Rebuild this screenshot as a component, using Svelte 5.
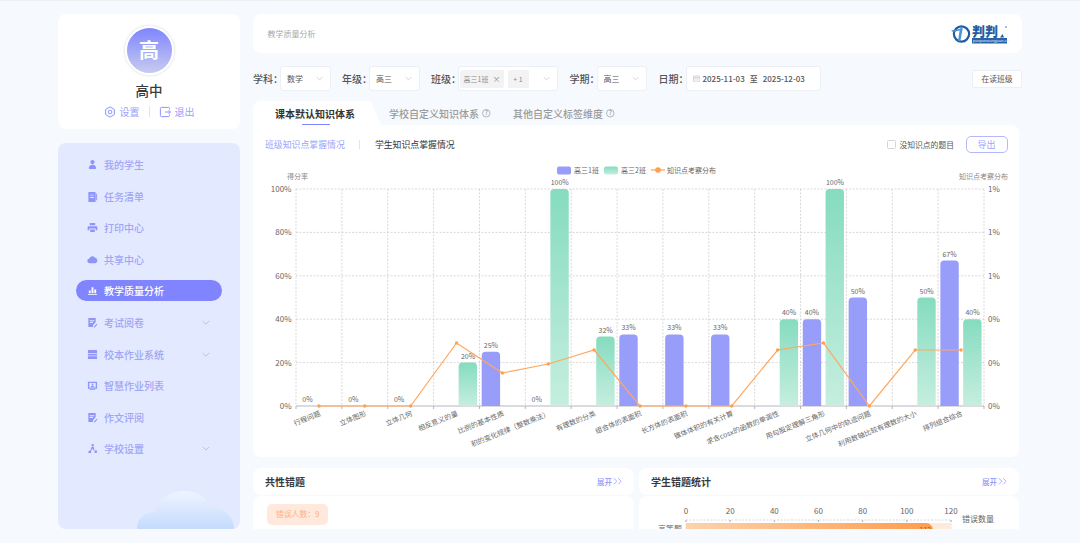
<script lang="ts">
	const navItems = [
		{ label: '我的学生', d: 'M6 1a2.3 2.3 0 1 1 0 4.6A2.3 2.3 0 0 1 6 1zM2 10c0-2.4 1.6-3.8 4-3.8s4 1.4 4 3.8c0 .6-.4 1-1 1H3c-.6 0-1-.4-1-1z' },
		{ label: '任务清单', d: 'M1.5 1h7a1 1 0 0 1 1 1v9a1 1 0 0 1-1 1h-7zM3.5 4v1h4V4zM3.5 6.5v1h4v-1zM10 3h1v7h-1z' },
		{ label: '打印中心', d: 'M3 1h6v2.5H3zM1.5 4.5h9a.8.8 0 0 1 .8.8V9H9.5V7.2h-7V9H.7V5.3a.8.8 0 0 1 .8-.8zM3.5 8.2h5V11h-5z' },
		{ label: '共享中心', d: 'M3 10a2.5 2.5 0 0 1-.4-5A3.5 3.5 0 0 1 9 4.2 3 3 0 0 1 9.2 10z' },
		{ label: '教学质量分析', d: 'M1 10h10v1H1zM2 6h2v3H2zM5 2.5h2V9H5zM8 5h2v4H8z', active: true },
		{ label: '考试阅卷', d: 'M1.5 1h8v4.5l-3 3.5V11h-5zM3 3.5v1h5v-1zM3 5.5v1h3.5v-1zM7.5 10.5l3-3.2.9.9-3 3.2H7.5z', more: true },
		{ label: '校本作业系统', d: 'M2 1h8a1 1 0 0 1 1 1v2.5H1V2a1 1 0 0 1 1-1zM1 5.5h10V7H1zM1 8h10v2a1 1 0 0 1-1 1H2a1 1 0 0 1-1-1z', more: true },
		{ label: '智慧作业列表', d: 'M1 2h10v7.5H1zM2.5 3.2v5h7v-5zM3 10h6v1H3zM6 3.8a1 1 0 1 1 0 2 1 1 0 0 1 0-2zM4 7.6c0-1 1-1.4 2-1.4s2 .4 2 1.4z' },
		{ label: '作文评阅', d: 'M1.5 1h8v4.5l-3 3.5V11h-5zM3 3.5v1h5v-1zM3 5.5v1h3.5v-1zM7.5 10.5l3-3.2.9.9-3 3.2H7.5z' },
		{ label: '学校设置', d: 'M6.2 1a1.3 1.3 0 1 1 0 2.6 1.3 1.3 0 0 1 0-2.6zM5 4.2h2.4L8 8H6.8L6 6 4.5 8.5V11h-3V9.2L4 7.5zM9.5 8a1.5 1.5 0 1 1 0 3 1.5 1.5 0 0 1 0-3z', more: true }
	];

	// chart coordinates are page pixels, the svg viewBox starts at the panel origin
	const left = 296;
	const right = 984;
	const top = 189;
	const base = 406;
	const step = (right - left) / 15;
	const plotH = base - top;

	const points = [
		{ name: '行程问题', blue: 0, line: 406 },
		{ name: '立体图形', blue: 0, line: 406 },
		{ name: '立体几何', blue: 0, line: 406 },
		{ name: '相反意义的量', green: 20, line: 343 },
		{ name: '比例的基本性质', blue: 25, line: 373 },
		{ name: '积的变化规律（整数乘法）', blue: 0, green: 100, line: 364 },
		{ name: '有理数的分类', green: 32, line: 350 },
		{ name: '组合体的表面积', blue: 33, line: 406 },
		{ name: '长方体的表面积', blue: 33, line: 406 },
		{ name: '锥体体积的有关计算', blue: 33, line: 406 },
		{ name: '求含cosx的函数的单调性', green: 40, line: 350 },
		{ name: '用勾股定理解三角形', blue: 40, green: 100, line: 343 },
		{ name: '立体几何中的轨迹问题', blue: 50, line: 406 },
		{ name: '利用数轴比较有理数的大小', green: 50, line: 350 },
		{ name: '排列组合综合', blue: 67, green: 40, line: 350 }
	];

	const yTicks = [
		{ left: '100%', right: '1%' },
		{ left: '80%', right: '1%' },
		{ left: '60%', right: '1%' },
		{ left: '40%', right: '0%' },
		{ left: '20%', right: '0%' },
		{ left: '0%', right: '0%' }
	];

	const cx = (i: number) => left + step * (i + 0.5);
	const barW = 18.4;

	function barPath(x: number, pct: number) {
		const h = (pct / 100) * plotH;
		const y = base - h;
		const r = Math.min(4, h);
		return `M${x} ${base}V${y + r}Q${x} ${y} ${x + r} ${y}H${x + barW - r}Q${x + barW} ${y} ${x + barW} ${y + r}V${base}Z`;
	}

	const linePath = points.map((p, i) => `${cx(i)},${p.line}`).join(' ');
	const errorTicks = [0, 20, 40, 60, 80, 100, 120];
	const errorX = (v: number) => 686 + (v / 120) * 265;
</script>

{#snippet chevron()}
	<svg class="chevron" viewBox="0 0 10 6"><path d="M1 1l4 4 4-4" /></svg>
{/snippet}

{#snippet help()}
	<svg class="help" viewBox="0 0 10 10">
		<circle cx="5" cy="5" r="4.4" />
		<text x="5" y="7.6" text-anchor="middle">?</text>
	</svg>
{/snippet}

{#snippet expand()}
	<span class="expand">
		展开
		<svg viewBox="0 0 10 8"><path d="M1 .8L4 4 1 7.2M5.5 .8L8.5 4 5.5 7.2" /></svg>
	</span>
{/snippet}

<div class="page">
	<aside class="side">
		<section class="profile">
			<div class="avatar">高</div>
			<div class="school">高中</div>
			<div class="links">
				<span class="link">
					<svg viewBox="0 0 12 12"><path d="M6 .9l4.4 2.5v5.2L6 11.1 1.6 8.6V3.4z" /><circle cx="6" cy="6" r="1.8" /></svg>
					设置
				</span>
				<i class="sep"></i>
				<span class="link">
					<svg viewBox="0 0 12 12"><path d="M10.5 3.5V2.4a1 1 0 0 0-1-1H2.4a1 1 0 0 0-1 1v7.2a1 1 0 0 0 1 1h7.1a1 1 0 0 0 1-1V8.5M6 6h5.4M9.6 4.2L11.4 6 9.6 7.8" /></svg>
					退出
				</span>
			</div>
		</section>

		<nav class="nav">
			{#each navItems as item}
				<div class="nav-item" class:active={item.active}>
					<svg class="nav-icon" viewBox="0 0 12 12"><path fill-rule="evenodd" d={item.d} /></svg>
					<span>{item.label}</span>
					{#if item.more}{@render chevron()}{/if}
				</div>
			{/each}
			<svg class="cloud" viewBox="0 0 97 38">
				<defs>
					<linearGradient id="cloudFill" x1="0" y1="0" x2="0" y2="1">
						<stop offset="0" stop-color="#eef4ff" />
						<stop offset="1" stop-color="#c4dbfd" />
					</linearGradient>
				</defs>
				<path fill="url(#cloudFill)" d="M0 38C0 27 8 21 18 21c1-11 14-21 29-21 14 0 24 7 27 17 13-1 23 8 23 21z" />
			</svg>
		</nav>
	</aside>

	<main class="main">
		<header class="top">
			<span class="crumb">教学质量分析</span>
			<svg class="logo" viewBox="0 0 58 22">
				<circle cx="10.5" cy="11" r="7.6" fill="none" stroke="#1f5da3" stroke-width="2.2" />
				<path d="M0 7.5l8.5-1.5 3.5-2.5-2.6 14.5H7l1.6-10.5-6.6 1.5z" fill="#4d93cf" />
				<text x="21" y="13.2" class="logo-name">判判</text>
				<rect x="21" y="15" width="35" height="5.5" fill="#2a62a8" />
				<text x="22" y="19.3" class="logo-sub">panpanwangjuan.cn</text>
				<path d="M49 14.5l2.5-3.5 1.5 3.5z" fill="#1f5da3" />
				<circle cx="55" cy="4" r="1.1" fill="#8fb1d6" />
			</svg>
		</header>

		<div class="filters">
			<label class="field">
				<span>学科：</span>
				<div class="select w50">数学{@render chevron()}</div>
			</label>
			<label class="field">
				<span>年级：</span>
				<div class="select w50">高三{@render chevron()}</div>
			</label>
			<label class="field">
				<span>班级：</span>
				<div class="select w100">
					<em class="chip">高三1班<b>×</b></em>
					<em class="chip plus">+ 1</em>
					{@render chevron()}
				</div>
			</label>
			<label class="field">
				<span>学期：</span>
				<div class="select w50">高三{@render chevron()}</div>
			</label>
			<label class="field">
				<span>日期：</span>
				<div class="select date">
					<svg viewBox="0 0 8 8"><rect x=".5" y="1" width="7" height="6.5" rx=".8" /><path d="M.5 3h7" /></svg>
					<strong>2025-11-03</strong><strong class="to">至</strong><strong>2025-12-03</strong>
				</div>
			</label>
			<button class="reading">在读班级</button>
		</div>

		<div class="tabs">
			<div class="tab current">课本默认知识体系</div>
			<div class="tab">学校自定义知识体系{@render help()}</div>
			<div class="tab">其他自定义标签维度{@render help()}</div>
		</div>

		<section class="panel">
			<div class="tools">
				<span class="sub on">班级知识点掌握情况</span>
				<i class="sep"></i>
				<span class="sub">学生知识点掌握情况</span>
				<span class="check"><i></i>没知识点的题目</span>
				<button class="export">导出</button>
			</div>

			<svg class="chart" viewBox="253 160 766 297">
				<defs>
					<linearGradient id="greenBar" x1="0" y1="0" x2="0" y2="1">
						<stop offset="0" stop-color="#85dcbf" />
						<stop offset="1" stop-color="#c6eedf" />
					</linearGradient>
				</defs>

				<!-- legend -->
				<rect x="557" y="166.5" width="14" height="8" rx="2" fill="#989dfa" />
				<text class="t7" x="574" y="173">高三1班</text>
				<rect x="604" y="166.5" width="14" height="8" rx="2" fill="url(#greenBar)" />
				<text class="t7" x="621" y="173">高三2班</text>
				<path d="M651 170h14" stroke="#ffa04d" stroke-width="1.2" />
				<circle cx="658" cy="170" r="2.8" fill="#ffa04d" />
				<text class="t7" x="667" y="173">知识点考察分布</text>

				<text class="t7 dim" x="287" y="179">得分率</text>
				<text class="t7 dim" x="1008" y="179" text-anchor="end">知识点考察分布</text>

				<!-- grid -->
				{#each yTicks as tick, i}
					{@const y = top + (plotH / 5) * i}
					{#if i < 5}<line class="grid" x1={left} x2={right} y1={y} y2={y} />{/if}
					<text class="axis" x="291.5" y={y + 3} text-anchor="end">{tick.left}</text>
					<text class="axis" x="988" y={y + 3}>{tick.right}</text>
				{/each}
				{#each Array(16) as _, i}
					<line class="grid" x1={left + step * i} x2={left + step * i} y1={top} y2={base} />
					<line class="base" x1={left + step * i} x2={left + step * i} y1={base} y2={base + 3} />
				{/each}
				<line class="base" x1={left} x2={right} y1={base} y2={base} />

				<!-- bars -->
				{#each points as p, i}
					{#if p.blue !== undefined}
						{#if p.blue > 0}<path d={barPath(cx(i) - 20.7, p.blue)} fill="#989dfa" />{/if}
						<text class="t7" x={cx(i) - 11.5} y={base - (p.blue / 100) * plotH - 4} text-anchor="middle">{p.blue}%</text>
					{/if}
					{#if p.green !== undefined}
						<path d={barPath(cx(i) + 2.1, p.green)} fill="url(#greenBar)" />
						<text class="t7" x={cx(i) + 11.5} y={base - (p.green / 100) * plotH - 4} text-anchor="middle">{p.green}%</text>
					{/if}
				{/each}

				<polyline points={linePath} fill="none" stroke="#ffa75f" stroke-width="1.2" />
				{#each points as p, i}
					<circle cx={cx(i)} cy={p.line} r="1.7" fill="#ffa04d" />
				{/each}

				<!-- category labels -->
				{#each points as p, i}
					<text class="cat" text-anchor="end" transform="translate({cx(i) + 2} 415.5) rotate(-22)">{p.name}</text>
				{/each}
			</svg>
		</section>

		<div class="bottom">
			<div class="col">
				<div class="card-head">
					<h3>共性错题</h3>
					{@render expand()}
				</div>
				<div class="card-body">
					<span class="wrong-tag">错误人数：9</span>
				</div>
			</div>
			<div class="col">
				<div class="card-head">
					<h3>学生错题统计</h3>
					{@render expand()}
				</div>
				<div class="card-body">
					<svg class="mini" viewBox="639 496 380 40">
						<defs>
							<linearGradient id="orangeBar" x1="0" y1="0" x2="1" y2="0">
								<stop offset="0" stop-color="#fbd3ac" />
								<stop offset="1" stop-color="#ff9c4d" />
							</linearGradient>
						</defs>
						{#each errorTicks as v}
							<text class="axis" x={errorX(v)} y="513.5" text-anchor="middle">{v}</text>
							<line class="grid" x1={errorX(v)} x2={errorX(v)} y1="520" y2="536" />
							<line class="base" x1={errorX(v)} x2={errorX(v)} y1="520" y2="522" />
						{/each}
						<line class="grid" x1="686" x2="951" y1="520" y2="520" />
						<rect x="686" y="523" width="265" height="14" fill="#fdeadb" />
						<path d="M686 523H926a7 7 0 0 1 7 7v7H686z" fill="url(#orangeBar)" />
						<text class="t7" x="931" y="532" text-anchor="end">112</text>
						<text class="axis" x="682" y="532" text-anchor="end">高等题</text>
						<text class="axis" x="962" y="522">错误数量</text>
					</svg>
				</div>
			</div>
		</div>
	</main>
</div>

<style>
	:global(body) {
		background: #fff;
		font-family: 'Noto Sans CJK SC', 'Noto Sans', sans-serif;
	}
	.page {
		box-sizing: border-box;
		height: 543px;
		padding: 14px 0 14px 58px;
		display: grid;
		grid-template-columns: 182px 769px;
		column-gap: 13px;
		background: #f6f9fd;
		box-shadow:
			inset 0 1px 0 #eceef1,
			0 1px 0 #e2e3e5;
		overflow: hidden;
	}
	.sep {
		display: block;
		width: 1px;
		height: 11px;
		background: #e3e4ea;
	}

	/* sidebar */
	.side {
		display: flex;
		flex-direction: column;
		gap: 14px;
		height: 515px;
	}
	.profile {
		height: 115px;
		background: #fff;
		border-radius: 8px;
		display: flex;
		flex-direction: column;
		align-items: center;
	}
	.avatar {
		box-sizing: border-box;
		width: 49px;
		height: 49px;
		margin-top: 11.5px;
		border: 2.5px solid #fff;
		border-radius: 50%;
		background: linear-gradient(#7f85ff, #c8cbee);
		box-shadow: 0 0 3px rgba(90, 90, 120, 0.28);
		color: #fff;
		font-size: 20px;
		font-weight: 700;
		line-height: 43px;
		text-align: center;
	}
	.school {
		margin-top: 5px;
		font-size: 13.5px;
		font-weight: 500;
		line-height: 20px;
		color: #3c3c3c;
	}
	.links {
		display: flex;
		align-items: center;
		gap: 9px;
		margin-top: 5px;
		font-size: 10px;
		line-height: 14px;
		color: #9da2f8;
	}
	.link {
		display: flex;
		align-items: center;
		gap: 4px;
	}
	.link svg {
		width: 12px;
		height: 12px;
		fill: none;
		stroke: #8f94fb;
		stroke-width: 1;
	}
	.nav {
		position: relative;
		flex: 1;
		background: #e3eaff;
		border-radius: 8px;
		padding: 11px 18px 0;
		display: flex;
		flex-direction: column;
		gap: 10.6px;
		overflow: hidden;
	}
	.nav-item {
		height: 21px;
		width: 146px;
		box-sizing: border-box;
		padding: 0 11px;
		display: flex;
		align-items: center;
		border-radius: 11px;
		font-size: 10px;
		font-weight: 500;
		color: #a0a5f6;
	}
	.nav-item.active {
		background: #8085ff;
		color: #fff;
	}
	.nav-icon {
		width: 11px;
		height: 11px;
		margin-right: 6px;
		fill: #8f94fb;
		flex: none;
	}
	.active .nav-icon {
		fill: #fff;
	}
	.nav-item .chevron {
		margin-left: auto;
		margin-right: 1px;
		width: 8px;
		stroke: #a8adf5;
	}
	.cloud {
		position: absolute;
		left: 79px;
		bottom: 0;
		width: 97px;
		height: 38px;
	}
	.chevron {
		width: 7px;
		height: 5px;
		fill: none;
		stroke: #b9bcc4;
		stroke-width: 0.9;
		flex: none;
	}

	/* main column */
	.main {
		height: 515px;
		overflow: hidden;
	}
	.top {
		height: 39px;
		background: #fff;
		border-radius: 8px;
		display: flex;
		align-items: center;
		justify-content: space-between;
		padding: 0 13px 0 14.5px;
	}
	.crumb {
		font-size: 8px;
		color: #a9a9a9;
	}
	.logo {
		width: 58px;
		height: 22px;
	}
	.logo-name {
		font-size: 13px;
		font-weight: 900;
		fill: #1f5da3;
	}
	.logo-sub {
		font-size: 4px;
		fill: #dfe9f5;
		font-family: 'Liberation Sans', sans-serif;
	}

	.filters {
		display: flex;
		align-items: center;
		gap: 11.5px;
		height: 25px;
		margin-top: 13px;
	}
	.field {
		display: flex;
		align-items: center;
		font-size: 10px;
		font-weight: 500;
		color: #555;
	}
	.field > span {
		width: 27px;
		white-space: nowrap;
	}
	.select {
		box-sizing: border-box;
		height: 25px;
		background: #fff;
		border: 1px solid #eceff4;
		border-radius: 3px;
		display: flex;
		align-items: center;
		padding: 0 6px;
		font-size: 8px;
		font-weight: 400;
		color: #555;
	}
	.w50 {
		width: 50.5px;
	}
	.w50 .chevron {
		margin-left: auto;
		margin-right: 1px;
	}
	.w100 {
		width: 100px;
		padding: 0 1px;
		gap: 3.5px;
	}
	.w100 .chevron {
		margin-left: auto;
		margin-right: 6px;
	}
	.chip {
		height: 18px;
		width: 44px;
		border-radius: 2px;
		background: #f3f3f5;
		font-style: normal;
		font-size: 7px;
		color: #8c8c8c;
		display: flex;
		align-items: center;
		justify-content: center;
		gap: 4px;
	}
	.chip b {
		font-weight: 400;
		font-size: 8px;
	}
	.chip.plus {
		width: 21px;
	}
	.date {
		width: 135px;
		padding: 0 6px;
	}
	.date svg {
		width: 7.5px;
		height: 7.5px;
		fill: #f0f0f0;
		stroke: #c4c4c4;
		stroke-width: 0.6;
		margin-right: 2.5px;
		flex: none;
	}
	.date strong {
		font-weight: 500;
		font-size: 8px;
		color: #555;
	}
	.date .to {
		margin: 0 5px;
	}
	.reading {
		margin-left: auto;
		box-sizing: border-box;
		width: 50px;
		height: 18px;
		padding: 0;
		background: #fff;
		border: 1px solid #eceff4;
		border-radius: 2px;
		font-family: inherit;
		font-size: 7.8px;
		color: #555;
	}

	.tabs {
		display: flex;
		height: 24px;
		margin-top: 10px;
		font-size: 10px;
		font-weight: 500;
		color: #9b9b9b;
	}
	.tab {
		display: flex;
		align-items: center;
		margin-left: 18px;
	}
	.tab:last-child {
		margin-left: 22.5px;
	}
	.tab.current {
		position: relative;
		margin-left: 0;
		width: 118px;
		padding-left: 22px;
		box-sizing: border-box;
		background: #fff;
		border-radius: 8px 0 0 0;
		color: #333;
		font-weight: 700;
	}
	.tab.current::before {
		content: '';
		position: absolute;
		top: 0;
		right: -5px;
		bottom: 0;
		width: 16px;
		background: #fff;
		border-top-right-radius: 5px;
		transform: skewX(22deg);
		z-index: 0;
	}
	.tab.current::after {
		content: '';
		position: absolute;
		left: 49px;
		bottom: 0;
		width: 28px;
		height: 1px;
		background: #8085ff;
	}
	.help {
		width: 8.5px;
		height: 8.5px;
		margin-left: 3px;
		overflow: visible;
	}
	.help circle {
		fill: none;
		stroke: #a0a0a0;
		stroke-width: 0.9;
	}
	.help text {
		font-size: 7.5px;
		fill: #999;
	}

	.panel {
		position: relative;
		width: 766px;
		height: 332px;
		background: #fff;
		border-radius: 0 8px 8px 8px;
	}
	.tools {
		display: flex;
		align-items: center;
		gap: 14.5px;
		height: 17px;
		padding: 11px 11.5px 0 12px;
		font-size: 8.9px;
		color: #333;
	}
	.sub.on {
		color: #9da2fb;
	}
	.tools .sep {
		height: 9px;
	}
	.check {
		margin-left: auto;
		display: flex;
		align-items: center;
		gap: 3px;
		font-size: 7.8px;
		color: #555;
	}
	.check i {
		width: 7px;
		height: 7px;
		border: 1px solid #d6d6d6;
		border-radius: 1.5px;
	}
	.export {
		box-sizing: border-box;
		width: 42px;
		height: 17px;
		padding: 0;
		margin-left: -3px;
		background: #fff;
		border: 1px solid #b5b8fc;
		border-radius: 5px;
		font-family: inherit;
		font-size: 9px;
		color: #a0a5fb;
	}
	.chart {
		display: block;
		width: 766px;
		height: 297px;
		margin-top: 7px;
	}
	.t7 {
		font-size: 7px;
		fill: #666;
	}
	.dim {
		fill: #888;
	}
	.axis {
		font-size: 8px;
		fill: #666;
	}
	.cat {
		font-size: 7px;
		fill: #666;
	}
	.grid {
		stroke: #cfcfcf;
		stroke-width: 0.8;
		stroke-dasharray: 2 1.5;
	}
	.base {
		stroke: #a4a4ae;
		stroke-width: 0.8;
	}

	/* bottom cards */
	.bottom {
		display: grid;
		grid-template-columns: 381px 380px;
		column-gap: 5px;
		width: 766px;
		margin-top: 11px;
	}
	.card-head {
		box-sizing: border-box;
		height: 27px;
		background: #fff;
		border-radius: 8px;
		display: flex;
		align-items: center;
		justify-content: space-between;
		padding: 0 11.5px 0 12px;
	}
	.card-head h3 {
		margin: 0;
		font-size: 10px;
		font-weight: 700;
		color: #3a3a3a;
	}
	.expand {
		display: flex;
		align-items: center;
		gap: 1px;
		font-size: 7.5px;
		font-weight: 500;
		color: #8f94f9;
	}
	.expand svg {
		width: 9.5px;
		height: 8.5px;
		fill: none;
		stroke: #9ea2fb;
		stroke-width: 0.9;
	}
	.card-body {
		height: 60px;
		margin-top: 1px;
		padding-top: 8px;
		box-sizing: border-box;
		background: #fff;
		border-radius: 8px 8px 0 0;
		overflow: hidden;
	}
	.wrong-tag {
		display: block;
		box-sizing: border-box;
		width: 61px;
		height: 20.5px;
		margin-left: 14px;
		padding-left: 9px;
		border-radius: 5px;
		background: #ffe9dc;
		font-size: 7.8px;
		line-height: 20.5px;
		color: #fdb184;
	}
	.mini {
		display: block;
		width: 380px;
		height: 40px;
		margin-top: -8px;
	}
</style>
